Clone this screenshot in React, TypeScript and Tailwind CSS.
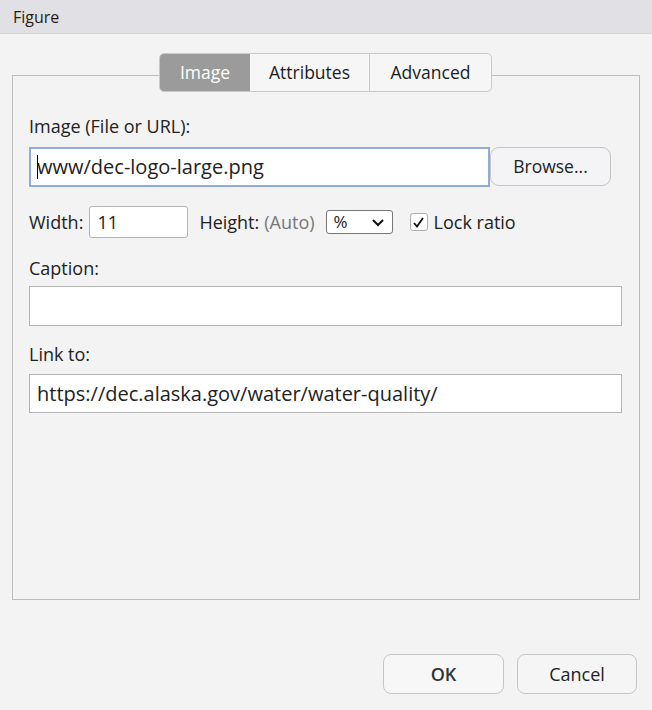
import React from "react";

const font = { fontFamily: '"Open Sans", "Noto Sans", sans-serif' };

export default function App() {
  return (
    <div className="w-[652px] h-[710px] bg-[#f2f3f2] flex flex-col text-[#222]" style={font}>
      {/* title bar */}
      <div className="h-[34px] bg-[#e1e1e5] border-b border-[#d6d6d8] flex items-center px-[13px] text-[16px] text-[#2a1a12]">
        Figure
      </div>

      <div className="relative mx-[12px] mt-[41px] h-[525px] border border-[#bdbdbd]">
        {/* tabs */}
        <div className="absolute top-[-23px] left-[146px] flex h-[39px] rounded-[5px] border border-[#c9c9c9] overflow-hidden text-[17.5px] bg-[#f6f6f6]">
          <div className="w-[90px] flex items-center justify-center bg-[#9b9b9b] text-white">Image</div>
          <div className="w-[120px] flex items-center justify-center border-r border-[#c9c9c9] text-[#1c1c1c]">Attributes</div>
          <div className="w-[121px] flex items-center justify-center text-[#1c1c1c]">Advanced</div>
        </div>

        <div className="pt-[38px] px-[16px] flex flex-col">
          <label className="text-[18px] leading-[24px]">Image (File or URL):</label>
          <div className="mt-[9px] flex">
            <div className="w-[461px] h-[40px] bg-white border-2 border-[#8fabda] flex items-center pl-[6px] text-[20px] text-[#222]">
              <span className="w-px h-[24px] bg-black mr-[-1px]"></span>
              www/dec-logo-large.png
            </div>
            <button className="w-[121px] h-[39px] rounded-[9px] border border-[#c6c6c6] bg-[#f4f4f6] text-[17.5px] text-[#222]">
              Browse...
            </button>
          </div>

          <div className="mt-[19px] flex items-center h-[32px] text-[18px]">
            <span>Width:</span>
            <div className="ml-[6px] w-[99px] h-[32px] bg-white border border-[#b5b5b5] rounded-[3px] flex items-center pl-[7px] text-[18px]">
              11
            </div>
            <span className="ml-[11px]">Height:</span>
            <span className="ml-[5px] text-[#777]">(Auto)</span>
            <div className="ml-[11px] w-[67px] h-[24px] bg-white border border-[#777] rounded-[3px] flex items-center justify-between px-[7px] text-[17px]">
              <span>%</span>
              <svg width="14" height="9" viewBox="0 0 14 9" fill="none" stroke="#111" strokeWidth="2">
                <path d="M2 2l5 5 5-5" />
              </svg>
            </div>
            <div className="ml-[17px] w-[18px] h-[18px] bg-white border border-[#b0b0b0] rounded-[3px] flex items-center justify-center">
              <svg width="13" height="13" viewBox="0 0 13 13" fill="none" stroke="#111" strokeWidth="1.8">
                <path d="M2 7l3 3.5L11 2" />
              </svg>
            </div>
            <span className="ml-[6px]">Lock ratio</span>
          </div>

          <label className="mt-[18px] text-[18px] leading-[24px]">Caption:</label>
          <div className="mt-[6px] w-[593px] h-[40px] bg-white border border-[#b5b5b5]"></div>

          <label className="mt-[16px] text-[18px] leading-[24px]">Link to:</label>
          <div className="mt-[8px] w-[593px] h-[39px] bg-white border border-[#b5b5b5] flex items-center pl-[7px] text-[20px]">
            https://dec.alaska.gov/water/water-quality/
          </div>
        </div>
      </div>

      <div className="mt-[54px] flex justify-end gap-[13px] pr-[15px]">
        <button className="w-[121px] h-[40px] rounded-[8px] border border-[#c6c6c6] bg-[#f7f7f7] text-[18px] font-semibold text-[#333]">
          OK
        </button>
        <button className="w-[120px] h-[40px] rounded-[8px] border border-[#c6c6c6] bg-[#f5f5f6] text-[18px] text-[#222]">
          Cancel
        </button>
      </div>
    </div>
  );
}
